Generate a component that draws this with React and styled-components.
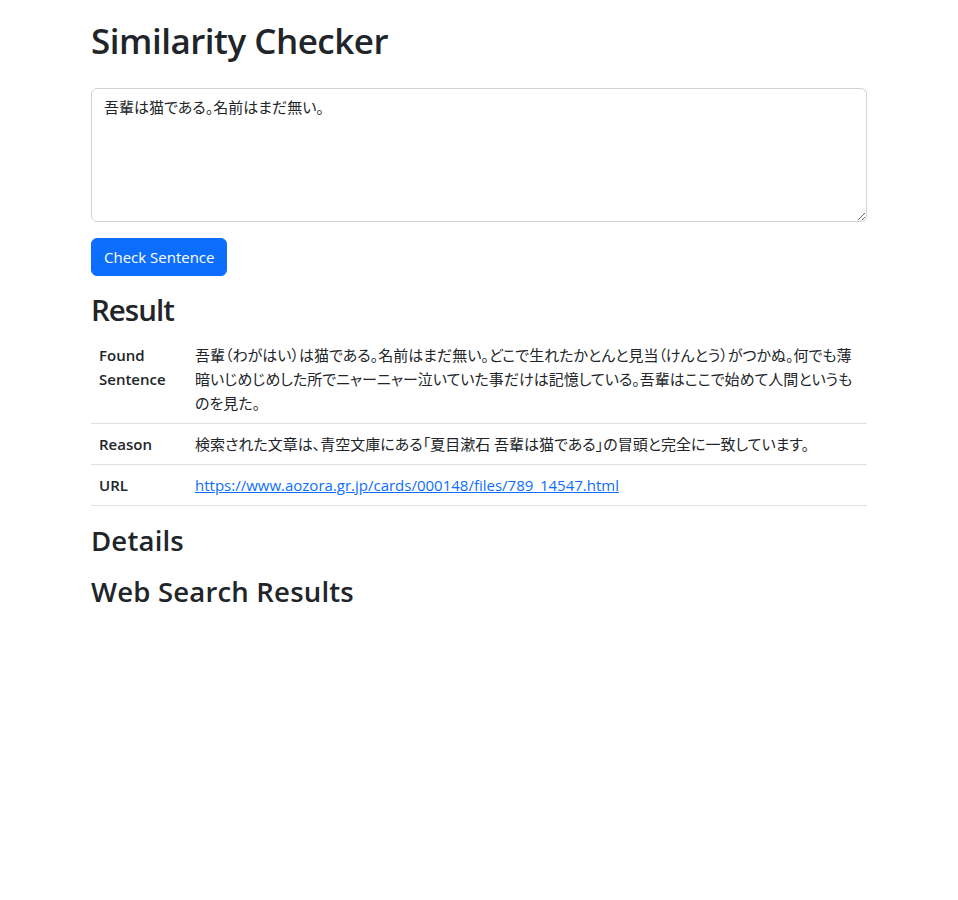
import styled, { createGlobalStyle } from "styled-components"

const GlobalStyle = createGlobalStyle`
    * {
        box-sizing: border-box;
    }

    body {
        margin: 0;
        font-family: "Open Sans", "Noto Sans CJK JP", sans-serif;
        font-size: 16px;
        line-height: 1.5;
        color: #212529;
        background-color: #fff;
        font-feature-settings: "palt";
    }
`

const result = [
    {
        label: "Found Sentence",
        value: "吾輩（わがはい）は猫である。名前はまだ無い。どこで生れたかとんと見当（けんとう）がつかぬ。何でも薄暗いじめじめした所でニャーニャー泣いていた事だけは記憶している。吾輩はここで始めて人間というものを見た。",
    },
    {
        label: "Reason",
        value: "検索された文章は、青空文庫にある「夏目漱石 吾輩は猫である」の冒頭と完全に一致しています。",
    },
    {
        label: "URL",
        link: "https://www.aozora.gr.jp/cards/000148/files/789_14547.html",
    },
]

export default function App () {
    return (
        <>
            <GlobalStyle />
            <Container>
                <Title>Similarity Checker</Title>
                <SentenceInput rows={5} defaultValue="吾輩は猫である。名前はまだ無い。" />
                <CheckButton type="button">Check Sentence</CheckButton>

                <SectionTitle>Result</SectionTitle>
                <ResultTable>
                    <tbody>
                        {result.map(row => (
                            <tr key={row.label}>
                                <th>{row.label}</th>
                                <td>
                                    {row.link ? <a href={row.link}>{row.link}</a> : row.value}
                                </td>
                            </tr>
                        ))}
                    </tbody>
                </ResultTable>

                <SubTitle>Details</SubTitle>
                <SubTitle>Web Search Results</SubTitle>
            </Container>
        </>
    )
}

//Styled Components//
const Container = styled.main`
    width: 100%;
    max-width: 800px;
    margin: 0 auto;
    padding: 20px 12px;
    display: flex;
    flex-direction: column;
    align-items: flex-start;
`

const Title = styled.h1`
    font-size: 35px;
    font-weight: 600;
    letter-spacing: -0.5px;
    line-height: 42px;
    margin: 0 0 26px;
`

const SentenceInput = styled.textarea`
    width: 100%;
    display: block;
    padding: 6px 12px;
    font-family: inherit;
    font-size: 15px;
    line-height: 24px;
    color: #212529;
    border: 1px solid #ced4da;
    border-radius: 6px;
    margin-bottom: 16px;
    resize: vertical;
    font-feature-settings: "palt";
`

const CheckButton = styled.button`
    height: 38px;
    padding: 6px 12px;
    font-family: inherit;
    font-size: 15px;
    line-height: 24px;
    color: #fff;
    background-color: #0d6efd;
    border: 1px solid #0d6efd;
    border-radius: 6px;
    cursor: pointer;
    margin-bottom: 16px;
`

const SectionTitle = styled.h2`
    font-size: 29.5px;
    font-weight: 600;
    letter-spacing: -1px;
    line-height: 36px;
    margin: 0 0 7px;
`

const SubTitle = styled.h3`
    font-size: 27.5px;
    font-weight: 600;
    letter-spacing: 0.2px;
    line-height: 33px;
    margin: 18px 0 0;

    & + & {
        margin-top: 18px;
    }
`

const ResultTable = styled.table`
    width: 100%;
    border-collapse: collapse;

    th, td {
        padding: 8px;
        border-bottom: 1px solid #dee2e6;
        text-align: left;
        vertical-align: top;
        font-size: 15px;
        line-height: 24px;
    }

    th {
        width: 96px;
        font-weight: 600;
    }

    a {
        color: #0d6efd;
        text-decoration: underline;
    }
`
